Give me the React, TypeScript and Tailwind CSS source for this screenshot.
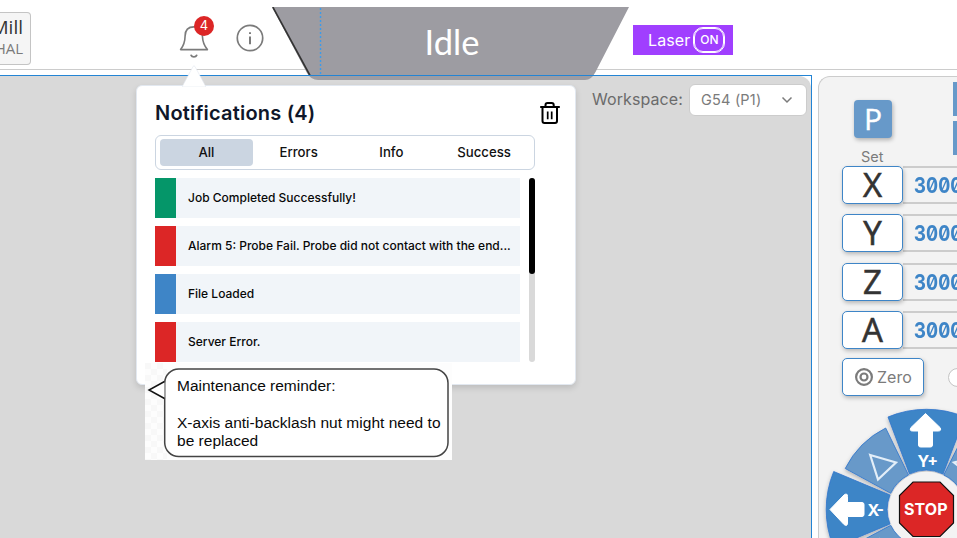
import React from "react";

const tabs = ["All", "Errors", "Info", "Success"];

const notes = [
  { text: "Job Completed Successfully!", bar: "bg-[#059669]" },
  { text: "Alarm 5: Probe Fail. Probe did not contact with the end...", bar: "bg-[#dc2626]" },
  { text: "File Loaded", bar: "bg-[#3e85c7]" },
  { text: "Server Error.", bar: "bg-[#dc2626]" },
];

const axes = [
  { name: "X", gap: "mt-0" },
  { name: "Y", gap: "mt-[10px]" },
  { name: "Z", gap: "mt-[11px]" },
  { name: "A", gap: "mt-[10px]" },
];

function BellIcon() {
  return (
    <svg width="30" height="36" viewBox="0 0 30 36" fill="none" stroke="#7b7b7b" strokeWidth="1.6" strokeLinecap="round" strokeLinejoin="round">
      <path d="M1.6 26.6 C4.8 22.5 6 18.5 6.1 13 C6.2 7 9.7 3.9 14.9 3.9 C20.1 3.9 23.2 7 23.4 13 C23.6 18.5 25 22.5 28.4 26.6 Z" />
      <path d="M12.2 32.4 C13 34.4 16.8 34.4 17.600 32.4" strokeWidth="1.900" />
    </svg>
  );
}

function Header() {
  return (
    <header className="flex h-[70px] shrink-0 border-b border-[#cccccc] bg-white">
      <div className="mt-3 flex h-[53px] w-[31px] shrink-0 flex-col items-end justify-center overflow-hidden rounded-r-[4px] border border-l-0 border-[#c4c4c4] bg-[#f5f5f5] pb-[2px] pr-[7px] font-['Open_Sans',sans-serif]">
        <span className="whitespace-nowrap text-[19px] leading-[21px] text-[#333333]">Mill</span>
        <span className="whitespace-nowrap text-[15px] leading-[20px] text-[#7b7b7b]">HAL</span>
      </div>
      <div className="relative ml-[148px] mt-[23px] h-9 w-[30px]">
        <BellIcon />
        <span className="absolute -top-[7px] left-[15px] flex size-5 items-center justify-center rounded-full bg-[#dc2626] text-[13px] text-white">4</span>
      </div>
      <svg className="ml-[27px] mt-6" width="28" height="28" viewBox="0 0 28 28" fill="none" stroke="#7b7b7b" strokeWidth="1.7">
        <circle cx="14" cy="14" r="12.7" />
        <path d="M14 12.5V20.3" strokeWidth="2" />
        <path d="M14 8.3V10" strokeWidth="2" />
      </svg>
      <div className="ml-[369px] mt-[25px] flex h-[30px] w-[100px] items-center bg-[#a03fff] pl-[15px] text-white">
        <span className="pb-px text-[16px] tracking-[0.1px]">Laser</span>
        <span className="ml-1 flex h-6 w-[30px] items-center justify-center rounded-[9px] border border-white text-[12px] font-medium outline-[0.5px] outline-white">ON</span>
      </div>
    </header>
  );
}

function Status() {
  return (
    <div className="absolute left-[272px] top-[7px] h-[73px] w-[358px]">
      <svg className="absolute inset-0" width="358" height="73" viewBox="0 0 358 73">
        <path d="M0 0H357L323.5 65Q319.500 73 313 73H46Q39 73 35 66Z" fill="#9d9ca2" />
        <path d="M0.800 0L38 68.500" stroke="#333333" strokeWidth="1.6" />
        <path d="M48.500 1V68" stroke="#3d9be9" strokeWidth="1.400" strokeDasharray="2 2" />
        <path d="M36 68.500H326" stroke="#2384d4" strokeWidth="1" />
      </svg>
      <span className="relative flex h-[69px] items-center justify-center pl-[2px] font-['Lato',sans-serif] text-[34.500px] text-white">Idle</span>
    </div>
  );
}

function Notifications() {
  return (
    <div className="absolute left-[136px] top-[85px] h-[300px] w-[440px] rounded-[6px] border border-[#e2e8f0] bg-white pl-[18px] shadow-[0_3px_6px_rgba(0,0,0,0.13)]">
      <svg className="absolute -top-[21px] left-[45px]" width="24" height="22" viewBox="0 0 24 22">
        <path d="M0 22L11 1.500Q12 0 13 1.500L24 22Z" fill="#ffffff" stroke="#e2e8f0" strokeWidth="0.600" />
      </svg>
      <div className="flex h-[49px] items-center justify-between pr-[14px] pt-[5px]">
        <h2 className="text-[20px] font-semibold leading-6 tracking-[0.2px] text-[#0f172a]">Notifications (4)</h2>
        <svg width="22" height="24" viewBox="0 0 22 24" fill="none" stroke="#000000" strokeWidth="2" strokeLinejoin="round">
          <path d="M1.200 6H20.800" />
          <path d="M6.500 5.500V4Q6.500 2 8.500 2H12.700Q14.700 2 14.700 4V5.500" />
          <path d="M3.500 6V20Q3.500 22 5.500 22H16Q18 22 18 20V6" />
          <path d="M8.700 10.500V18.200M12.700 10.500V18.200" strokeWidth="1.700" />
        </svg>
      </div>
      <div className="grid h-[35px] w-[380px] grid-cols-4 rounded-[6px] border border-[#cbd5e1] p-[3px] pl-1 text-[13.200px] font-medium text-[#111111]">
        {tabs.map((t, i) => (
          <div key={t} className={i === 0 ? "flex items-center justify-center rounded-[4px] bg-[#cbd5e1] pt-px" : "flex items-center justify-center pr-px pt-px"}>{t}</div>
        ))}
      </div>
      <div className="mt-2 flex">
        <div className="flex w-[365px] flex-col gap-2">
          {notes.map((n) => (
            <div key={n.text} className="flex h-10 items-center bg-[#f1f5f9]">
              <span className={`h-10 w-[21px] ${n.bar}`} />
              <span className="ml-3 whitespace-nowrap text-[12px] font-medium text-[#080808]">{n.text}</span>
            </div>
          ))}
        </div>
        <div className="ml-[9px] h-[184px] w-[6px] rounded-full bg-[#d9d9d9]">
          <div className="h-24 w-[6px] rounded-full bg-black" />
        </div>
      </div>
    </div>
  );
}

function Reminder() {
  return (
    <div className="absolute left-[145px] top-[363px] h-[97px] w-[307px] bg-[#fdfdfd]">
      <svg className="absolute inset-0" width="307" height="97" viewBox="0 0 307 97">
        <defs>
          <pattern id="tiles" width="12" height="12" patternUnits="userSpaceOnUse">
            <path d="M0 0h6v6h-6zM6 6h6v6h-6z" fill="#f8f8f8" />
          </pattern>
        </defs>
        <rect width="22" height="97" fill="url(#tiles)" />
        <rect x="19.700" y="6" width="283.300" height="87.500" rx="14" fill="#ffffff" stroke="#444444" strokeWidth="1.500" />
        <path d="M19.500 18.500L4 27L19.500 35.500" fill="#ffffff" stroke="#111111" strokeWidth="1.500" />
      </svg>
      <div className="relative pl-8 pt-[14px] font-['Liberation_Sans',Arial,sans-serif] text-[15.500px] leading-[18px] text-[#0a0a0a]">
        <p className="whitespace-nowrap">Maintenance reminder:</p>
        <p className="mt-[19px] whitespace-nowrap tracking-[0.02px]">X-axis anti-backlash nut might need to<br />be replaced</p>
      </div>
    </div>
  );
}

function JogWheel() {
  return (
    <svg className="mt-1 shrink-0" width="139" height="138" viewBox="818 400 139 138">
      <defs>
        <filter id="lift" x="-20%" y="-20%" width="140%" height="140%">
          <feDropShadow dx="0" dy="2" stdDeviation="2" floodColor="#000000" floodOpacity="0.28" />
        </filter>
      </defs>
      <g filter="url(#lift)" stroke="#2f74cc" strokeWidth="0.800">
        <path d="M888 417A100 100 0 0 1 965 417L943 474A39 39 0 0 0 909.500 474Z" fill="#3e85c7" />
        <path d="M833.700 471.500A100 100 0 0 0 833.700 547.500L890 524A39 39 0 0 1 890 495Z" fill="#3e85c7" />
        <path d="M885.700 428A91 91 0 0 0 845.200 468.500L890.700 493.300A39 39 0 0 1 908.500 475Z" fill="#6799c9" />
        <path d="M967.300 428A91 91 0 0 1 1007.800 468.500L962.300 493.300A39 39 0 0 0 943.700 475Z" fill="#6799c9" />
        <path d="M885.700 590A91 91 0 0 1 845.200 549.500L890.700 525.300A39 39 0 0 0 908.500 543Z" fill="#6799c9" />
      </g>
      <circle cx="926.500" cy="509.500" r="38" fill="#f3f3f3" />
      <path d="M913 482L940 482L953.500 495.500V523L940 536.500H913L899.500 523V495.500Z" fill="#dc2626" stroke="#111111" strokeWidth="1.200" />
      <path d="M925.500 413.500L940 427.500Q942 431 938 431H932.500V445Q932.500 447 930.500 447H920.500Q918.500 447 918.500 445V431H912.500Q909 431 911 427.500Z" fill="#ffffff" stroke="#ffffff" strokeLinejoin="round" strokeWidth="1" />
      <path d="M830 509.500L844 495Q847.500 492.500 847.500 496.500V502.500H862Q864 502.500 864 504.500V514.500Q864 516.500 862 516.500H847.500V523Q847.500 527 844 524.500Z" fill="#ffffff" stroke="#ffffff" strokeLinejoin="round" strokeWidth="1" />
      <path d="M870.200 455L896 462.500L878 479.500Z" fill="none" stroke="#e3eef8" strokeWidth="2.200" />
      <path d="M982.800 455L954 462.500L975 479.500Z" fill="none" stroke="#e3eef8" strokeWidth="2.200" />
      <path d="M877 543L879.500 537.500L882 543Z" fill="#e3eef8" />
      <g fill="#ffffff" fontFamily="Inter, sans-serif" fontWeight="700">
        <text x="917.500" y="467" fontSize="16" textLength="20.500">Y+</text>
        <text x="867.500" y="516" fontSize="16" textLength="16.500">X-</text>
        <text x="904" y="515" fontSize="16" textLength="43.500">STOP</text>
      </g>
    </svg>
  );
}

function Controls() {
  return (
    <aside className="mt-[6px] flex w-[139px] shrink-0 flex-col overflow-hidden rounded-tl-[12px] border-l border-t border-[#cccccc] bg-[#f3f3f3]">
      <div className="flex h-[71px] shrink-0 justify-between">
        <div className="ml-[35px] mt-[23px] flex size-[38px] items-center justify-center rounded-[4px] bg-[#6799c9] font-['Open_Sans',sans-serif] text-[30px] leading-none text-white shadow-[1px_2px_4px_rgba(0,0,0,0.28)] [-webkit-text-stroke:0.4px_white]">P</div>
        <div className="mt-[5px] flex w-1 flex-col gap-[5px]">
          <div className="h-[34px] shrink-0 bg-[#6799c9]" />
          <div className="h-[34px] shrink-0 bg-[#6799c9]" />
        </div>
      </div>
      <span className="ml-[42px] h-[18px] shrink-0 text-[14.500px] leading-[18px] text-[#7b7b7b]">Set</span>
      {axes.map((a) => (
        <div key={a.name} className={`ml-[23px] flex h-[38px] shrink-0 ${a.gap}`}>
          <div className="z-10 flex h-[38px] w-[61px] shrink-0 items-center justify-center rounded-[5px] border border-[#3e85c7] bg-white font-['Open_Sans',sans-serif] text-[33px] leading-[34px] text-[#333333] shadow-[1px_2px_4px_rgba(0,0,0,0.25)] [-webkit-text-stroke:0.6px_#333333]">{a.name}</div>
          <div className="flex h-[38px] w-[54px] items-center border-y-2 border-[#cccccc] pl-[11px] text-[#3e85c7]">
            <span className="origin-left scale-x-[0.85] text-[22px] font-bold [font-feature-settings:'zero','tnum']">3000</span>
          </div>
        </div>
      ))}
      <div className="ml-[23px] mt-[9px] flex h-[38px] shrink-0 items-center">
        <div className="flex h-[38px] w-[82px] shrink-0 items-center rounded-[5px] border border-[#3e85c7] bg-white pl-3 shadow-[1px_2px_4px_rgba(0,0,0,0.25)]">
          <svg width="18" height="18" viewBox="0 0 18 18" fill="none" stroke="#7b7b7b" strokeWidth="2.200">
            <circle cx="9" cy="9" r="7.900" /><circle cx="9" cy="9" r="3.500" />
          </svg>
          <span className="ml-1 text-[16px] text-[#7b7b7b]">Zero</span>
        </div>
        <div className="ml-6 size-[19px] shrink-0 rounded-full border border-[#c4c4c4] bg-white" />
      </div>
      <div className="-ml-px flex">
        <JogWheel />
      </div>
    </aside>
  );
}

export default function App() {
  return (
    <div className="relative flex h-[538px] w-[957px] flex-col overflow-hidden bg-white font-['Inter',sans-serif]">
      <Header />
      <main className="flex min-h-0 flex-1">
        <section className="mt-[5px] w-[812px] shrink-0 border-r border-t border-[#2384d4] bg-white">
          <div className="flex h-full items-start justify-end rounded-tr-[12px] bg-[#d9d9d9] pr-[5px] pt-2">
            <span className="mr-[6px] mt-[3px] text-[16px] leading-6 tracking-[0.1px] text-[#6b6b6b]">Workspace:</span>
            <div className="-mr-px flex h-8 w-[118px] items-center justify-between rounded-[6px] border border-[#cccccc] bg-white pl-[11px] pr-[13px] text-[14.500px] tracking-[0.2px] text-[#7b7b7b]">
              G54 (P1)
              <svg width="12" height="8" viewBox="0 0 12 8" fill="none" stroke="#7b7b7b" strokeWidth="1.500"><path d="M1.500 1.500L6 6L10.500 1.500" /></svg>
            </div>
          </div>
        </section>
        <div className="w-[6px] shrink-0" />
        <Controls />
      </main>
      <Status />
      <Notifications />
      <Reminder />
    </div>
  );
}
